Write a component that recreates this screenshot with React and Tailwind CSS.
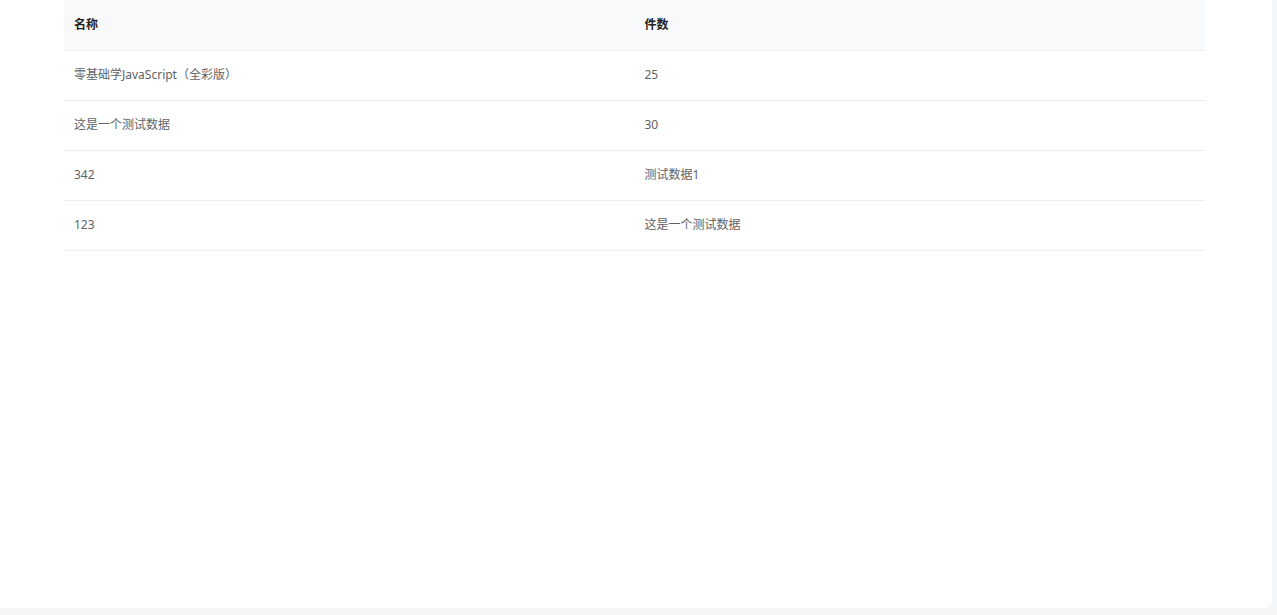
export default function App() {
  const rows = [
    ["零基础学JavaScript（全彩版）", "25"],
    ["这是一个测试数据", "30"],
    ["342", "测试数据1"],
    ["123", "这是一个测试数据"],
  ];
  return (
    <div className="h-[615px] w-[1277px] bg-[#f5f6f7] pr-[5px] pb-[7px]" style={{ fontFamily: '"Noto Sans", "Noto Sans CJK SC", sans-serif' }}>
      <div className="h-full w-full bg-white rounded-br-lg pl-[64px] pr-[67px]">
        <table className="w-full table-fixed border-collapse text-[12px]">
          <thead>
            <tr className="bg-[#f8f9fb] border-b border-[#ebeef5] h-[50px]">
              <th className="text-left font-bold text-[#222] px-[10px]">名称</th>
              <th className="text-left font-bold text-[#222] px-[10px]">件数</th>
            </tr>
          </thead>
          <tbody>
            {rows.map((r, i) => (
              <tr key={i} className="border-b border-[#ebeef5] h-[50px]">
                <td className="px-[10px] text-[#606266]">{r[0]}</td>
                <td className="px-[10px] text-[#606266]">{r[1]}</td>
              </tr>
            ))}
          </tbody>
        </table>
      </div>
    </div>
  );
}
